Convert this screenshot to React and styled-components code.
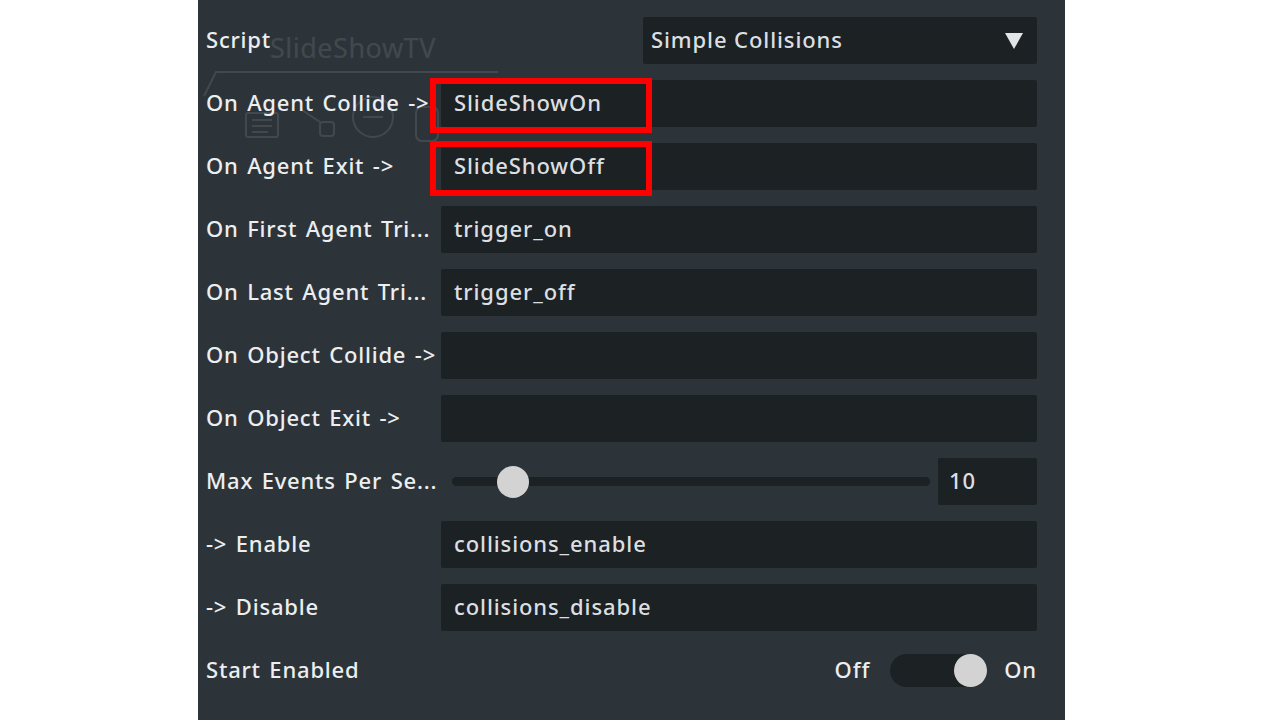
import React from 'react'
import styled, { createGlobalStyle } from 'styled-components'

const GlobalStyle = createGlobalStyle`
	html, body {
		margin: 0;
		padding: 0;
		background: #ffffff;
	}
	body {
		font-family: "Noto Sans", "Open Sans", sans-serif;
	}
`

const Panel = styled.div`
	position: relative;
	margin-left: 198px;
	width: 867px;
	height: 720px;
	box-sizing: border-box;
	padding: 17px 28px 0 8px;
	background: #2c343a;
	display: flex;
	flex-direction: column;
	gap: 16px;
	overflow: hidden;
`

const Ghost = styled.div`
	position: absolute;
	left: 0;
	top: 0;
	width: 320px;
	height: 150px;
	opacity: 0.1;
	pointer-events: none;
	color: #ffffff;
`

const GhostTitle = styled.div`
	position: absolute;
	left: 72px;
	top: 29px;
	font-size: 27px;
	letter-spacing: 0.5px;
	font-family: "Noto Sans", sans-serif;
`

const Row = styled.div`
	position: relative;
	display: flex;
	align-items: center;
	height: 47px;
	z-index: 1;
`

const Label = styled.div`
	width: 235px;
	flex: 0 0 235px;
	padding-bottom: 3px;
	font-size: 22px;
	font-weight: 500;
	letter-spacing: 0.8px;
	word-spacing: 2px;
	color: #eceeef;
	white-space: nowrap;
	overflow: hidden;
`

const Field = styled.div`
	position: relative;
	flex: 1;
	height: 47px;
	box-sizing: border-box;
	padding: 0 0 3px 13px;
	display: flex;
	align-items: center;
	background: #1c2124;
	border-radius: 2px;
	font-size: 22px;
	font-weight: 500;
	letter-spacing: 0.9px;
	color: #dcdfe1;
`

const Highlight = styled.div`
	position: absolute;
	left: -11px;
	top: -2px;
	width: 222px;
	height: 55px;
	box-sizing: border-box;
	border: 6px solid #ff0000;
`

const Select = styled(Field)`
	flex: 0 0 394px;
	margin-left: auto;
	justify-content: space-between;
	padding: 0 14px 3px 8px;
`

const Arrow = styled.span`
	width: 0;
	height: 0;
	margin-top: 3px;
	border-left: 9px solid transparent;
	border-right: 9px solid transparent;
	border-top: 16px solid #e2e4e6;
`

const SliderArea = styled.div`
	flex: 1;
	display: flex;
	align-items: center;
	padding: 0 8px 0 11px;
`

const Track = styled.div`
	position: relative;
	flex: 1;
	height: 9px;
	border-radius: 5px;
	background: #1c2124;
`

const Thumb = styled.div`
	position: absolute;
	top: 50%;
	width: 32px;
	height: 32px;
	border-radius: 50%;
	background: #d3d3d3;
	transform: translate(-50%, -50%);
`

const NumberBox = styled(Field)`
	flex: 0 0 99px;
	padding-left: 11px;
`

const ToggleWrap = styled.div`
	margin-left: auto;
	display: flex;
	align-items: center;
	font-size: 22px;
	font-weight: 500;
	letter-spacing: 0.9px;
	color: #eceeef;
`

const ToggleText = styled.span`
	padding-bottom: 3px;
`

const ToggleTrack = styled.div`
	position: relative;
	width: 95px;
	height: 33px;
	margin: 0 19px 0 20px;
	border-radius: 17px;
	background: #1c2124;
`

const ToggleThumb = styled.div`
	position: absolute;
	right: -2px;
	top: 0;
	width: 33px;
	height: 33px;
	border-radius: 50%;
	background: #d3d3d3;
`

const rows = [
	{ label: 'On Agent Collide ->', value: 'SlideShowOn', mark: true },
	{ label: 'On Agent Exit ->', value: 'SlideShowOff', mark: true },
	{ label: 'On First Agent Tri...', value: 'trigger_on' },
	{ label: 'On Last Agent Tri...', value: 'trigger_off' },
	{ label: 'On Object Collide ->', value: '' },
	{ label: 'On Object Exit ->', value: '' },
]

const App = () => {
	const sliderPos = 12.7

	return (
		<>
			<GlobalStyle />
			<Panel>
				<Ghost>
					<GhostTitle>SlideShowTV</GhostTitle>
					<svg width="320" height="150" viewBox="0 0 320 150" fill="none" stroke="#ffffff" strokeWidth="2">
						<path d="M6 96 L18 72 L300 72" />
						<rect x="48" y="113" width="32" height="24" rx="2" />
						<path d="M54 120 H74 M54 126 H74 M54 132 H70" />
						<path d="M104 110 L122 122" />
						<rect x="122" y="122" width="14" height="14" rx="3" />
						<circle cx="175" cy="117" r="20" />
						<path d="M165 117 H185" />
						<rect x="218" y="107" width="22" height="34" rx="6" />
					</svg>
				</Ghost>

				<Row>
					<Label>Script</Label>
					<Select>
						<span>Simple Collisions</span>
						<Arrow />
					</Select>
				</Row>

				{rows.map((r) => (
					<Row key={r.label}>
						<Label>{r.label}</Label>
						<Field>
							{r.mark && <Highlight />}
							{r.value}
						</Field>
					</Row>
				))}

				<Row>
					<Label>Max Events Per Se...</Label>
					<SliderArea>
						<Track>
							<Thumb style={{ left: `${sliderPos}%` }} />
						</Track>
					</SliderArea>
					<NumberBox>10</NumberBox>
				</Row>

				<Row>
					<Label>-&gt; Enable</Label>
					<Field>collisions_enable</Field>
				</Row>

				<Row>
					<Label>-&gt; Disable</Label>
					<Field>collisions_disable</Field>
				</Row>

				<Row>
					<Label>Start Enabled</Label>
					<ToggleWrap>
						<ToggleText>Off</ToggleText>
						<ToggleTrack>
							<ToggleThumb />
						</ToggleTrack>
						<ToggleText>On</ToggleText>
					</ToggleWrap>
				</Row>
			</Panel>
		</>
	)
}

export default App
